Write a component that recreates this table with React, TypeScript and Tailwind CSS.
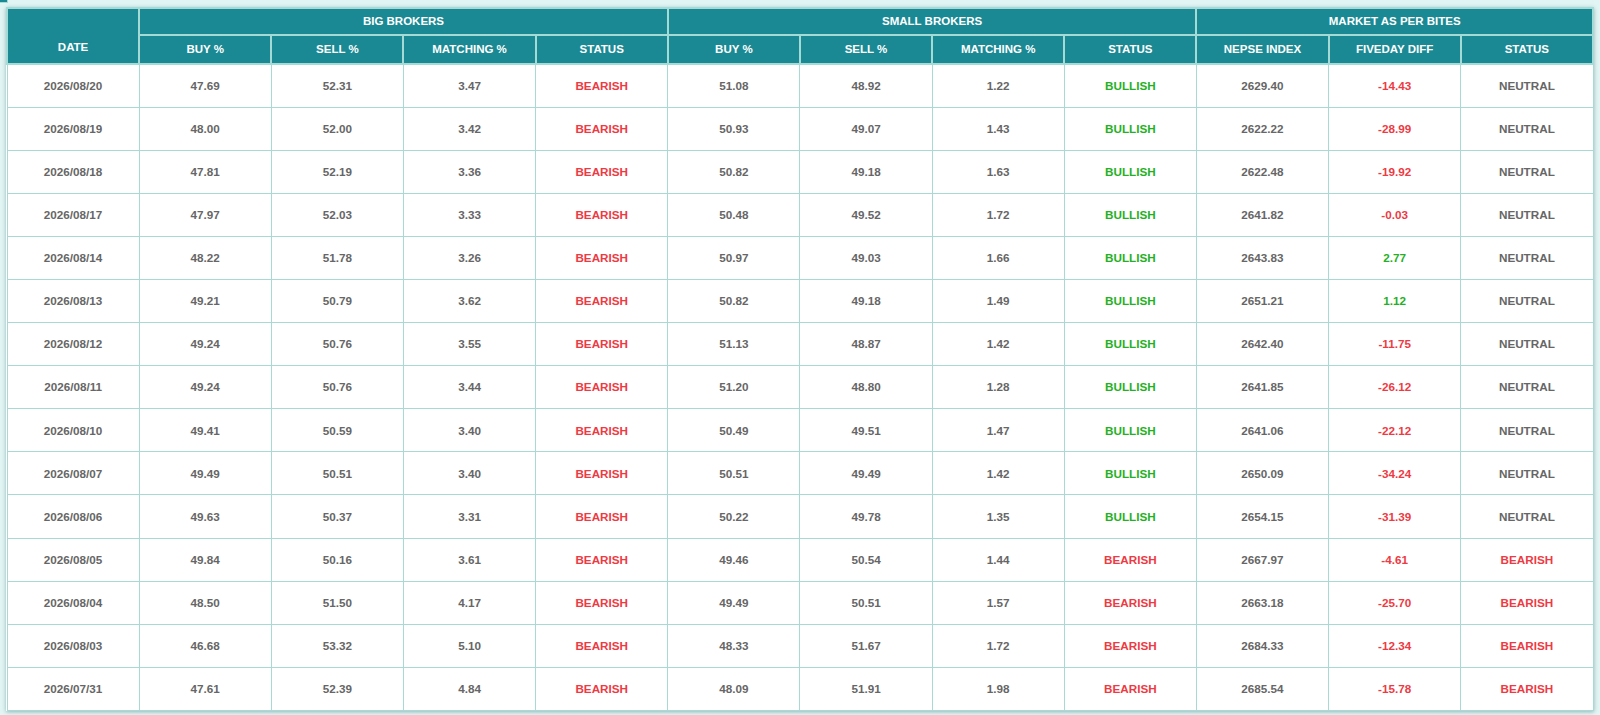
import React from "react";

type Row = {
  date: string;
  big: [string, string, string, string];
  small: [string, string, string, string];
  nepse: string;
  diff: string;
  status: string;
};

const rows: Row[] = [
  { date: "2026/08/20", big: ["47.69", "52.31", "3.47", "BEARISH"], small: ["51.08", "48.92", "1.22", "BULLISH"], nepse: "2629.40", diff: "-14.43", status: "NEUTRAL" },
  { date: "2026/08/19", big: ["48.00", "52.00", "3.42", "BEARISH"], small: ["50.93", "49.07", "1.43", "BULLISH"], nepse: "2622.22", diff: "-28.99", status: "NEUTRAL" },
  { date: "2026/08/18", big: ["47.81", "52.19", "3.36", "BEARISH"], small: ["50.82", "49.18", "1.63", "BULLISH"], nepse: "2622.48", diff: "-19.92", status: "NEUTRAL" },
  { date: "2026/08/17", big: ["47.97", "52.03", "3.33", "BEARISH"], small: ["50.48", "49.52", "1.72", "BULLISH"], nepse: "2641.82", diff: "-0.03", status: "NEUTRAL" },
  { date: "2026/08/14", big: ["48.22", "51.78", "3.26", "BEARISH"], small: ["50.97", "49.03", "1.66", "BULLISH"], nepse: "2643.83", diff: "2.77", status: "NEUTRAL" },
  { date: "2026/08/13", big: ["49.21", "50.79", "3.62", "BEARISH"], small: ["50.82", "49.18", "1.49", "BULLISH"], nepse: "2651.21", diff: "1.12", status: "NEUTRAL" },
  { date: "2026/08/12", big: ["49.24", "50.76", "3.55", "BEARISH"], small: ["51.13", "48.87", "1.42", "BULLISH"], nepse: "2642.40", diff: "-11.75", status: "NEUTRAL" },
  { date: "2026/08/11", big: ["49.24", "50.76", "3.44", "BEARISH"], small: ["51.20", "48.80", "1.28", "BULLISH"], nepse: "2641.85", diff: "-26.12", status: "NEUTRAL" },
  { date: "2026/08/10", big: ["49.41", "50.59", "3.40", "BEARISH"], small: ["50.49", "49.51", "1.47", "BULLISH"], nepse: "2641.06", diff: "-22.12", status: "NEUTRAL" },
  { date: "2026/08/07", big: ["49.49", "50.51", "3.40", "BEARISH"], small: ["50.51", "49.49", "1.42", "BULLISH"], nepse: "2650.09", diff: "-34.24", status: "NEUTRAL" },
  { date: "2026/08/06", big: ["49.63", "50.37", "3.31", "BEARISH"], small: ["50.22", "49.78", "1.35", "BULLISH"], nepse: "2654.15", diff: "-31.39", status: "NEUTRAL" },
  { date: "2026/08/05", big: ["49.84", "50.16", "3.61", "BEARISH"], small: ["49.46", "50.54", "1.44", "BEARISH"], nepse: "2667.97", diff: "-4.61", status: "BEARISH" },
  { date: "2026/08/04", big: ["48.50", "51.50", "4.17", "BEARISH"], small: ["49.49", "50.51", "1.57", "BEARISH"], nepse: "2663.18", diff: "-25.70", status: "BEARISH" },
  { date: "2026/08/03", big: ["46.68", "53.32", "5.10", "BEARISH"], small: ["48.33", "51.67", "1.72", "BEARISH"], nepse: "2684.33", diff: "-12.34", status: "BEARISH" },
  { date: "2026/07/31", big: ["47.61", "52.39", "4.84", "BEARISH"], small: ["48.09", "51.91", "1.98", "BEARISH"], nepse: "2685.54", diff: "-15.78", status: "BEARISH" },
];

const statusColor = (s: string) =>
  s === "BEARISH" ? "text-[#ee3a43]" : s === "BULLISH" ? "text-[#25b024]" : "text-[#666666]";

const diffColor = (d: string) => (d.startsWith("-") ? "text-[#ee3a43]" : "text-[#25b024]");

const Th = ({ children, colSpan, rowSpan }: { children: React.ReactNode; colSpan?: number; rowSpan?: number }) => (
  <th
    colSpan={colSpan}
    rowSpan={rowSpan}
    className={`border-2 border-[#a5dbd6] bg-[#1b8993] text-white text-[11.5px] font-bold uppercase text-center ${
      rowSpan ? "align-bottom pb-[7px]" : "align-middle"
    }`}
  >
    {children}
  </th>
);

const Td = ({ children, className = "" }: { children: React.ReactNode; className?: string }) => (
  <td className={`border border-[#a9d9d4] text-center text-[11.7px] font-bold ${className}`}>{children}</td>
);

export default function App() {
  return (
    <div className="relative min-h-screen w-full bg-[#e2f5f5] pt-[7px] pl-[6px]" style={{ fontFamily: '"Liberation Sans", Arial, sans-serif' }}>
      <div className="absolute left-0 top-0 h-[3px] w-[8px] bg-[#1b8993] border-r border-b border-[#a5dbd6]" />
      <table className="w-[1588px] table-fixed border-collapse bg-white shadow-[0_1px_4px_rgba(0,60,60,0.35)]">
        <thead>
          <tr className="h-[27px]">
            <Th rowSpan={2}>Date</Th>
            <Th colSpan={4}>Big Brokers</Th>
            <Th colSpan={4}>Small Brokers</Th>
            <Th colSpan={3}>Market as per Bites</Th>
          </tr>
          <tr className="h-[29px]">
            <Th>Buy %</Th>
            <Th>Sell %</Th>
            <Th>Matching %</Th>
            <Th>Status</Th>
            <Th>Buy %</Th>
            <Th>Sell %</Th>
            <Th>Matching %</Th>
            <Th>Status</Th>
            <Th>Nepse Index</Th>
            <Th>Fiveday Diff</Th>
            <Th>Status</Th>
          </tr>
        </thead>
        <tbody>
          {rows.map((r) => (
            <tr key={r.date} className="h-[43.1px]">
              <Td className="text-[#666666]">{r.date}</Td>
              <Td className="text-[#666666]">{r.big[0]}</Td>
              <Td className="text-[#666666]">{r.big[1]}</Td>
              <Td className="text-[#666666]">{r.big[2]}</Td>
              <Td className={statusColor(r.big[3])}>{r.big[3]}</Td>
              <Td className="text-[#666666]">{r.small[0]}</Td>
              <Td className="text-[#666666]">{r.small[1]}</Td>
              <Td className="text-[#666666]">{r.small[2]}</Td>
              <Td className={statusColor(r.small[3])}>{r.small[3]}</Td>
              <Td className="text-[#666666]">{r.nepse}</Td>
              <Td className={diffColor(r.diff)}>{r.diff}</Td>
              <Td className={statusColor(r.status)}>{r.status}</Td>
            </tr>
          ))}
        </tbody>
      </table>
    </div>
  );
}
